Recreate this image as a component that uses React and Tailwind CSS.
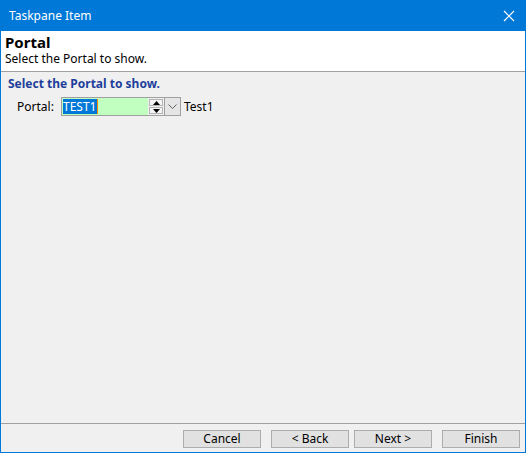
import React from "react";

const font = { fontFamily: '"Segoe UI", "Noto Sans", "Open Sans", sans-serif' };

function WizardButton({ children, className = "" }) {
  return (
    <button
      className={`flex h-[18px] w-[78px] items-center justify-center border border-[#adadad] bg-[#e1e1e1] text-[12px] leading-none text-black ${className}`}
    >
      {children}
    </button>
  );
}

export default function App() {
  return (
    <div
      className="flex h-[453px] w-[526px] flex-col bg-[#0078d7] px-[1px] pb-[1px]"
      style={font}
    >
      <div className="flex h-[31px] items-center justify-between pl-[8px] pr-[10px] text-[12px] text-white">
        <span>Taskpane Item</span>
        <svg width="12" height="12" viewBox="0 0 12 12">
          <path d="M1 1 L11 11 M11 1 L1 11" stroke="white" strokeWidth="1.2" />
        </svg>
      </div>

      <div className="flex flex-1 flex-col bg-[#f0f0f0]">
        <div className="h-[38px] border-b border-[#a0a0a0] bg-white pl-[4px] pt-[2px] text-black box-content">
          <div className="text-[15px] font-bold leading-[18px]">Portal</div>
          <div className="text-[12px] leading-[16px]">Select the Portal to show.</div>
        </div>

        <div className="flex-1 pl-[7px] pt-[4px]">
          <div className="text-[12px] font-bold leading-[16px] text-[#1d3f9b]">
            Select the Portal to show.
          </div>
          <div className="mt-[5px] flex items-center">
            <span className="ml-[9px] w-[44px] text-[12px]">Portal:</span>
            <div className="flex h-[19px] w-[120px] border border-[#a0a0a0]">
              <div className="flex flex-1 items-center bg-[#c0ffc0] pl-[1px]">
                <span className="flex h-[15px] items-center border-r border-[#ff8a00] bg-[#0078d7] pr-[1px] text-[12px] leading-none text-white">
                  TEST1
                </span>
              </div>
              <div className="flex w-[16px] flex-col gap-[1px] bg-[#f0f0f0] p-[1px]">
                <div className="flex flex-1 items-center justify-center border border-[#b4b4b4] bg-[#f4f4f4]">
                  <svg width="7" height="4" viewBox="0 0 7 4">
                    <path d="M0 4 L3.5 0 L7 4 Z" fill="black" />
                  </svg>
                </div>
                <div className="flex flex-1 items-center justify-center border border-[#b4b4b4] bg-[#f4f4f4]">
                  <svg width="7" height="4" viewBox="0 0 7 4">
                    <path d="M0 0 L3.5 4 L7 0 Z" fill="black" />
                  </svg>
                </div>
              </div>
              <div className="flex w-[16px] items-center justify-center border-l border-[#a0a0a0] bg-[#e5e5e5]">
                <svg width="9" height="5" viewBox="0 0 9 5">
                  <path d="M0.5 0.5 L4.5 4.5 L8.5 0.5" stroke="#606060" fill="none" />
                </svg>
              </div>
            </div>
            <span className="ml-[3px] text-[12px]">Test1</span>
          </div>
        </div>

        <div className="flex h-[29px] items-center border-t border-[#a0a0a0] pl-[182px] pt-[1px]">
          <WizardButton>Cancel</WizardButton>
          <WizardButton className="ml-[10px]">&lt; Back</WizardButton>
          <WizardButton className="ml-[5px]">Next &gt;</WizardButton>
          <WizardButton className="ml-[10px]">Finish</WizardButton>
        </div>
      </div>
    </div>
  );
}
